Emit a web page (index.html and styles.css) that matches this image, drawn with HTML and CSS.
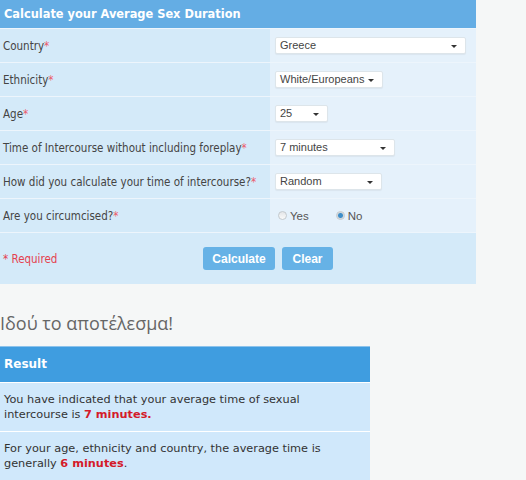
FILE: index.html
```html
<!DOCTYPE html>
<html lang="en">
<head>
  <meta charset="UTF-8">
  <title>Average Sex Duration Calculator</title>
  <link rel="stylesheet" href="styles.css">
</head>
<body>

<div class="calc">
  <div class="calc-head">Calculate your Average Sex Duration</div>

  <div class="row">
    <div class="label">Country<span class="req">*</span></div>
    <div class="field"><span class="select w-country">Greece</span></div>
  </div>
  <div class="row">
    <div class="label">Ethnicity<span class="req">*</span></div>
    <div class="field"><span class="select w-ethnicity">White/Europeans</span></div>
  </div>
  <div class="row">
    <div class="label">Age<span class="req">*</span></div>
    <div class="field"><span class="select w-age">25</span></div>
  </div>
  <div class="row">
    <div class="label">Time of Intercourse without including foreplay<span class="req">*</span></div>
    <div class="field"><span class="select w-time">7 minutes</span></div>
  </div>
  <div class="row">
    <div class="label">How did you calculate your time of intercourse?<span class="req">*</span></div>
    <div class="field"><span class="select w-method">Random</span></div>
  </div>
  <div class="row">
    <div class="label">Are you circumcised?<span class="req">*</span></div>
    <div class="field radios">
      <label class="radio"><span class="dot"></span>Yes</label>
      <label class="radio"><span class="dot checked"></span>No</label>
    </div>
  </div>

  <div class="foot">
    <div class="required">* Required</div>
    <div class="actions">
      <button class="btn btn-calc">Calculate</button>
      <button class="btn btn-clear">Clear</button>
    </div>
  </div>
</div>

<h3 class="result-title">Ιδού το αποτέλεσμα!</h3>

<div class="result">
  <div class="result-head">Result</div>
  <div class="result-row">You have indicated that your average time of sexual intercourse is <b>7 minutes.</b></div>
  <div class="result-row">For your age, ethnicity and country, the average time is generally <b>6 minutes</b>.</div>
</div>

</body>
</html>
```

FILE: styles.css
```css
body {
  margin: 0;
  background: #f5f7f7;
  font-family: "DejaVu Sans", Verdana, sans-serif;
  color: #444;
}

.calc {
  width: 476px;
  background: #d4eaf9;
}

.calc-head {
  height: 28px;
  line-height: 28px;
  padding-left: 4px;
  background: #64ade4;
  color: #fff;
  font-weight: bold;
  font-size: 11.4px;
}

.row {
  display: grid;
  grid-template-columns: 270px 1fr;
  height: 33px;
  border-top: 1px solid #edf5fc;
}

.label {
  display: flex;
  align-items: center;
  padding-left: 3px;
  font-family: "DejaVu Sans Condensed", Tahoma, sans-serif;
  font-size: 11.5px;
  color: #444;
}

.req {
  color: #ec5a6a;
}

.field {
  display: flex;
  align-items: center;
  padding-left: 5px;
  background: #e5f1fb;
}

.select {
  position: relative;
  box-sizing: border-box;
  height: 17px;
  line-height: 15px;
  padding-left: 4px;
  background: #fff;
  border: 1px solid #dde5ea;
  border-radius: 2px;
  box-shadow: 0 1px 1px rgba(0, 0, 0, 0.05);
  font-family: "Liberation Sans", Arial, sans-serif;
  font-size: 11px;
  color: #444;
}

.select::after {
  content: "";
  position: absolute;
  right: 8px;
  top: 7px;
  border-left: 3px solid transparent;
  border-right: 3px solid transparent;
  border-top: 3px solid #333;
}

.w-country { width: 191px; }
.w-ethnicity { width: 108px; }
.w-age { width: 53px; }
.w-time { width: 120px; }
.w-method { width: 107px; }

.radios {
  padding-left: 8px;
  gap: 27px;
}

.radio {
  display: flex;
  align-items: center;
  gap: 3px;
  font-family: "Liberation Sans", Arial, sans-serif;
  font-size: 11.5px;
  color: #555;
}

.dot {
  box-sizing: border-box;
  width: 9px;
  height: 9px;
  border-radius: 50%;
  border: 1px solid #c3c9cd;
  background: linear-gradient(#e4e6e8, #fafafa);
}

.dot.checked {
  background: radial-gradient(circle, #3e8ec9 0 2px, #cfd6db 3px, #f2f4f5 4px);
}

.foot {
  display: grid;
  grid-template-columns: 203px auto;
  align-items: center;
  height: 51px;
  border-top: 1px solid #edf5fc;
}

.required {
  padding-left: 3px;
  font-family: "DejaVu Sans Condensed", Tahoma, sans-serif;
  font-size: 11.5px;
  color: #e5414f;
}

.actions {
  display: flex;
  gap: 7px;
}

.btn {
  height: 23px;
  padding: 0;
  border: none;
  border-radius: 3px;
  background: #66b2e6;
  color: #fff;
  font-family: "Liberation Sans", Arial, sans-serif;
  font-weight: bold;
  font-size: 12px;
}

.btn-calc { width: 72px; }
.btn-clear { width: 51px; }

.result-title {
  margin: 27px 0 11px;
  line-height: 24px;
  font-family: "Open Sans", sans-serif;
  font-weight: normal;
  font-size: 18px;
  color: #666;
}

.result {
  width: 370px;
}

.result-head {
  height: 35px;
  line-height: 35px;
  padding-left: 4px;
  border-top: 1px solid #8cc3ec;
  background: #3f9de0;
  color: #fff;
  font-weight: bold;
  font-size: 12px;
}

.result-row {
  padding: 9px 4px 9px;
  line-height: 15px;
  background: #d0e8fb;
  border-top: 1px solid #fff;
  font-size: 11.3px;
  color: #333;
}

.result-row b {
  color: #d41a2a;
}
```
